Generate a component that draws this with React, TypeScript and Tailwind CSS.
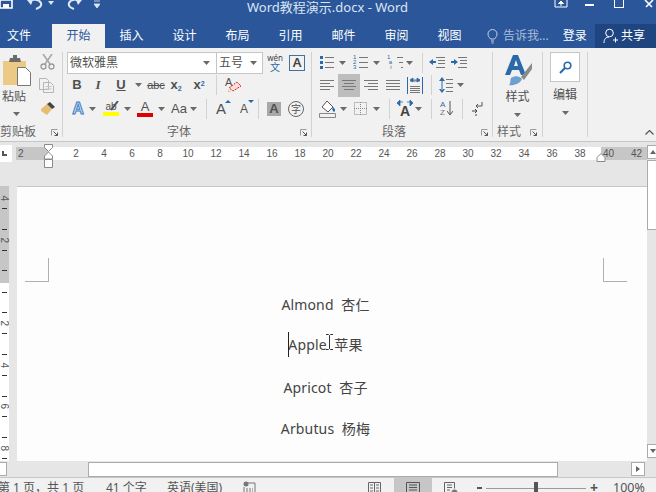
import type { ReactNode } from 'react';

const tabs = ['开始', '插入', '设计', '布局', '引用', '邮件', '审阅', '视图'];
const rulerNums = [2, 4, 6, 8, 10, 12, 14, 16, 18, 20, 22, 24, 26, 28, 30, 32, 34, 36, 38];

function Drop({ className = '' }: { className?: string }) {
  return (
    <svg width="7" height="4" viewBox="0 0 7 4" className={`shrink-0 ${className}`}>
      <path d="M0 0h7L3.5 4z" fill="#6a6a6a" />
    </svg>
  );
}

function Sep({ className = '' }: { className?: string }) {
  return <div className={`w-px h-[20px] bg-[#d2d2d2] shrink-0 ${className}`} />;
}

function Launcher() {
  return (
    <svg width="7" height="7" viewBox="0 0 7 7" className="shrink-0">
      <path d="M0.5 6.5V0.5H6.5" fill="none" stroke="#9a9a9a" />
      <path d="M2.5 2.5L6.5 6.5M6.5 3.5V6.5H3.5" fill="none" stroke="#555" />
    </svg>
  );
}

function Lines({ d, className = '' }: { d: string; className?: string }) {
  return (
    <svg width="14" height="13" viewBox="0 0 14 13" className={`shrink-0 ${className}`}>
      <path d={d} fill="none" stroke="#777" />
    </svg>
  );
}

function Row({ children, className = '' }: { children: ReactNode; className?: string }) {
  return <div className={`flex items-center ${className}`}>{children}</div>;
}

// the two kinds of cell in the vertical ruler
function VCell({ v }: { v: string }) {
  if (v === '') return <div className="h-[10.4px]" />;
  if (v === '-')
    return (
      <div className="h-[10.4px] flex items-center pl-[2px]">
        <div className="w-[5px] h-px bg-[#333]" />
      </div>
    );
  return (
    <div className="h-[10.4px] flex items-center justify-center text-[10px] text-[#555] rotate-90 font-['Liberation_Sans',sans-serif]">
      {v}
    </div>
  );
}

function GroupLabel({ text, className = '' }: { text: string; className?: string }) {
  return (
    <div className="h-[14px] mt-auto -mb-[2px] flex items-center">
      <span className={`text-[12px] leading-[14px] text-[#666] whitespace-nowrap ${className}`}>{text}</span>
      <div className="w-[16px] ml-auto flex justify-center">
        <Launcher />
      </div>
    </div>
  );
}

function TitleBar() {
  return (
    <div className="h-[24px] bg-[#2b579a] flex items-start overflow-hidden text-white">
      <svg width="13" height="9" viewBox="0 0 13 9" className="shrink-0">
        <path d="M0 0h12v8H0z" fill="none" stroke="#fff" strokeWidth="1.6" />
        <path d="M3 4h6v4H3z" fill="#fff" />
      </svg>
      <svg width="16" height="10" viewBox="0 0 16 10" className="ml-[14px] shrink-0">
        <path d="M2 1c3-2 10-2 12 2 1 3-2 5-5 6" fill="none" stroke="#dfe7f3" strokeWidth="2" />
        <path d="M0 0l6 0-2 5z" fill="#dfe7f3" />
      </svg>
      <svg width="6" height="4" viewBox="0 0 6 4" className="ml-[5px] mt-[1px] shrink-0">
        <path d="M0 0h6L3 4z" fill="#dfe7f3" />
      </svg>
      <svg width="15" height="10" viewBox="0 0 15 10" className="ml-[13px] shrink-0">
        <path d="M13 1C10-1 4-1 2 3c-1 3 2 5 5 6" fill="none" stroke="#dfe7f3" strokeWidth="2" />
        <path d="M15 0L9 0l2 5z" fill="#dfe7f3" />
      </svg>
      <svg width="6" height="8" viewBox="0 0 6 8" className="ml-[12px] shrink-0">
        <path d="M0 1h6M0 4h6L3 8z" fill="#dfe7f3" stroke="#dfe7f3" strokeWidth="0.8" />
      </svg>
      <span className="ml-[147px] text-[13px] leading-[14px] text-[#dce5f2] whitespace-nowrap">Word教程演示.docx - Word</span>
      <svg width="14" height="8" viewBox="0 0 14 8" className="ml-auto shrink-0">
        <path d="M1 0v7h12V0" fill="none" stroke="#fff" />
        <path d="M7 6V1M4.5 3.5L7 1l2.5 2.5z" fill="#fff" stroke="#fff" />
      </svg>
      <div className="w-[9px] h-[2px] bg-white ml-[17px] mt-[4px] shrink-0" />
      <div className="w-[10px] h-[8px] border border-white border-t-0 ml-[20px] shrink-0" />
      <svg width="10" height="8" viewBox="0 0 10 8" className="ml-[20px] mr-[2px] shrink-0">
        <path d="M1 0l7 7M9 0L2 7" stroke="#fff" strokeWidth="1.6" />
      </svg>
    </div>
  );
}

function TabBar() {
  return (
    <div className="h-[24px] bg-[#2b579a] flex items-stretch text-[12px] text-white">
      <div className="w-[38px] flex items-center justify-center">文件</div>
      <div className="ml-[14px] flex">
        {tabs.map((t, i) => (
          <div
            key={t}
            className={
              i === 0
                ? 'w-[53px] flex items-center justify-center bg-[#f1f1f1] text-[#2b579a]'
                : 'w-[53px] flex items-center justify-center'
            }
          >
            {t}
          </div>
        ))}
      </div>
      <svg width="11" height="15" viewBox="0 0 11 15" className="ml-[11px] self-center shrink-0">
        <path d="M3.5 10C2 8 1 7 1 5a4.5 4.5 0 0 1 9 0c0 2-1 3-2.500 5zM4 12h3M4.500 14h2" fill="none" stroke="#c5d3e6" />
      </svg>
      <span className="ml-[5px] self-center text-[#a9bcd8] whitespace-nowrap">告诉我...</span>
      <span className="ml-[14px] self-center whitespace-nowrap">登录</span>
      <div className="ml-auto w-[61px] bg-[#1f4580] flex items-center pl-[8px]">
        <svg width="15" height="16" viewBox="0 0 15 16" className="shrink-0">
          <circle cx="6.500" cy="5" r="3.800" fill="none" stroke="#fff" />
          <path d="M1 15c0-4 2-6 5-6M10 12h5M12.500 9.500v5" fill="none" stroke="#fff" />
        </svg>
        <span className="ml-[3px] whitespace-nowrap">共享</span>
      </div>
    </div>
  );
}

function ClipboardGroup() {
  return (
    <div className="w-[63px] h-[85px] border-r border-[#d2d2d2] flex flex-col shrink-0">
      <div className="flex">
        <div className="w-[37px] pl-[3px] flex flex-col">
          <svg width="28" height="31" viewBox="0 0 28 31" className="mt-[3px]">
            <path d="M0 6h23v24H0z" fill="#ecca85" />
            <path d="M7 3h3V0h4v3h3l1 4H6z" fill="#6b6b6b" />
            <path d="M14.500 12.500h8l5 5v13h-13z" fill="#fff" stroke="#777" />
          </svg>
          <span className="text-[12px] leading-[16px] text-[#555] mt-[3px] -ml-[1px] whitespace-nowrap">粘贴</span>
          <Drop className="ml-[10px] mt-[7px]" />
        </div>
        <div className="flex flex-col">
          <svg width="15" height="16" viewBox="0 0 15 16" className="ml-[3px] mt-[2px]">
            <path d="M3 0l7 10M12 0L5 10" stroke="#a5a5a5" strokeWidth="1.500" />
            <circle cx="3.500" cy="12.500" r="2.500" fill="none" stroke="#9a9a9a" strokeWidth="1.300" />
            <circle cx="11.500" cy="12.500" r="2.500" fill="none" stroke="#9a9a9a" strokeWidth="1.300" />
          </svg>
          <svg width="15" height="15" viewBox="0 0 15 15" className="ml-[2px] mt-[8px]">
            <path d="M.5.500h7l2 2v9H.5z M4.500 4.500h7l3 3v7h-10z" fill="#f1f1f1" stroke="#b5b5b5" />
            <path d="M6.500 8.500h6M6.500 11h6" stroke="#c5c5c5" />
          </svg>
          <svg width="16" height="15" viewBox="0 0 16 15" className="ml-[3px] mt-[8px]">
            <path d="M1 8l6-5 5 5-5 6-6-4z" fill="#e7bd72" />
            <path d="M7 3l3-2 5 5-3 2z" fill="#444" />
          </svg>
        </div>
      </div>
      <GroupLabel text="剪贴板" />
    </div>
  );
}

function FontGroup() {
  return (
    <div className="w-[249px] h-[85px] border-r border-[#d2d2d2] flex flex-col shrink-0 text-[#505050]">
      <Row className="h-[21px]">
        <div className="ml-[4px] w-[150px] h-[22px] bg-white border border-[#c6c6c6] flex items-center pl-[2px] pr-[6px] text-[12px]">
          <span>微软雅黑</span>
          <Drop className="ml-auto" />
        </div>
        <div className="-ml-px w-[47px] h-[22px] bg-white border border-[#c6c6c6] flex items-center pl-[2px] pr-[5px] text-[12px]">
          <span>五号</span>
          <Drop className="ml-auto" />
        </div>
        <div className="ml-[4px] w-[16px] h-[20px] flex flex-col items-center text-[#2b6aa8]">
          <span className="text-[8px] leading-[9px] text-[#444]">wén</span>
          <span className="text-[10px] leading-[11px]">文</span>
        </div>
        <div className="ml-[6px] w-[16px] h-[16px] border border-[#41719c] flex items-center justify-center text-[13px] font-semibold leading-none text-[#444]">
          A
        </div>
      </Row>

      <Row className="h-[18px] mt-[3px] font-['Liberation_Sans',sans-serif]">
        <span className="w-[14px] ml-[7px] text-center text-[13px] font-bold">B</span>
        <span className="w-[14px] ml-[7px] text-center text-[13px] italic font-['Liberation_Serif',serif] font-bold">I</span>
        <span className="w-[14px] ml-[9px] text-center text-[13px] font-bold underline">U</span>
        <Drop className="ml-[7px]" />
        <span className="w-[18px] ml-[5px] text-center text-[11px] line-through">abc</span>
        <span className="w-[14px] ml-[4px] text-center text-[13px] font-bold">
          x<sub className="text-[7px] text-[#2b6aa8]">2</sub>
        </span>
        <span className="w-[14px] ml-[9px] text-center text-[13px] font-bold">
          x<sup className="text-[7px] text-[#2b6aa8]">2</sup>
        </span>
        <Sep className="ml-[10px]" />
        <div className="ml-[8px] w-[18px] h-[18px] relative">
          <span className="text-[11px] leading-[12px] block">A</span>
          <svg width="14" height="11" viewBox="0 0 14 11" className="absolute left-[3px] top-[5px]">
            <path d="M1 7l8-6 4 4-8 5z" fill="#fbdede" stroke="#d92020" strokeDasharray="2 1" />
            <path d="M0 9l3 2-3 0z" fill="#e7bd72" />
          </svg>
        </div>
      </Row>

      <Row className="h-[19px] mt-[5px] font-['Liberation_Sans',sans-serif]">
        <span className="w-[14px] ml-[8px] text-center text-[16px] font-bold text-[#cfe0f3] [-webkit-text-stroke:1px_#3f7fc4]">A</span>
        <Drop className="ml-[4px]" />
        <div className="w-[16px] ml-[7px] flex flex-col items-center relative">
          <span className="text-[10px] leading-[11px]">ab</span>
          <div className="w-[16px] h-[4px] bg-[#ffff00]" />
          <svg width="9" height="11" viewBox="0 0 9 11" className="absolute right-0 top-0">
            <path d="M8 0L1 9" stroke="#555" strokeWidth="2" />
          </svg>
        </div>
        <Drop className="ml-[5px]" />
        <div className="w-[16px] ml-[6px] flex flex-col items-center">
          <span className="text-[13px] leading-[12px]">A</span>
          <div className="w-[16px] h-[4px] bg-[#e00000]" />
        </div>
        <Drop className="ml-[5px]" />
        <span className="w-[16px] ml-[6px] text-center text-[13px]">Aa</span>
        <Drop className="ml-[3px]" />
        <Sep className="ml-[9px]" />
        <div className="w-[13px] ml-[9px] relative">
          <span className="text-[15px] leading-[15px] block">A</span>
          <svg width="6" height="3" viewBox="0 0 6 3" className="absolute -right-[2px] -top-[1px]">
            <path d="M0 3h6L3 0z" fill="#2b6aa8" />
          </svg>
        </div>
        <div className="w-[12px] ml-[11px] relative">
          <span className="text-[12px] leading-[13px] block pt-[2px]">A</span>
          <svg width="6" height="3" viewBox="0 0 6 3" className="absolute -right-[2px] -top-[1px]">
            <path d="M0 0h6L3 3z" fill="#2b6aa8" />
          </svg>
        </div>
        <Sep className="ml-[6px]" />
        <div className="w-[14px] h-[14px] ml-[8px] bg-[#a8a8a8] flex items-center justify-center text-[13px] font-bold leading-none">
          A
        </div>
        <div className="w-[16px] h-[16px] ml-[7px] rounded-full border border-[#666] flex items-center justify-center text-[10px] leading-none font-['Noto_Sans_CJK_SC',sans-serif]">
          字
        </div>
      </Row>

      <GroupLabel text="字体" className="flex-1 text-center" />
    </div>
  );
}

function ParaGroup() {
  const dots = 'M5 1.500h9M5 6.500h9M5 11.500h9';
  return (
    <div className="w-[181px] h-[85px] border-r border-[#d2d2d2] flex flex-col shrink-0 text-[#444]">
      <Row className="h-[21px]">
        <div className="ml-[8px] w-[14px] relative">
          <Lines d={dots} />
          <svg width="3" height="13" viewBox="0 0 3 13" className="absolute left-0 top-0">
            <path d="M0 0h3v3H0zM0 5h3v3H0zM0 10h3v3H0z" fill="#2b6aa8" />
          </svg>
        </div>
        <Drop className="ml-[5px]" />
        <div className="ml-[7px] w-[15px] flex items-center">
          <span className="text-[6px] leading-[5px] w-[5px] text-[#2b6aa8] font-['Liberation_Sans',sans-serif]">1<br />2<br />3</span>
          <svg width="10" height="13" viewBox="0 0 10 13" className="shrink-0">
            <path d="M1 1.500h9M1 6.500h9M1 11.500h9" fill="none" stroke="#777" />
          </svg>
        </div>
        <Drop className="ml-[5px]" />
        <div className="ml-[7px] w-[16px] flex items-center">
          <span className="text-[6px] leading-[5px] w-[8px] text-[#2b6aa8] font-['Liberation_Sans',sans-serif]">1<br />&nbsp;a<br />&nbsp;&nbsp;i</span>
          <svg width="8" height="13" viewBox="0 0 8 13" className="shrink-0">
            <path d="M2 1.500h6M4 6.500h4M6 11.500h2" fill="none" stroke="#777" />
          </svg>
        </div>
        <Drop className="ml-[3px]" />
        <Sep className="ml-[9px]" />
        <svg width="16" height="13" viewBox="0 0 16 13" className="ml-[6px] shrink-0">
          <path d="M7 1.500h9M9 4.500h7M9 7.500h7M7 11.500h9" fill="none" stroke="#777" />
          <path d="M0 6l4-3v2h3v2H4v2z" fill="#2b6aa8" />
        </svg>
        <svg width="16" height="13" viewBox="0 0 16 13" className="ml-[6px] shrink-0">
          <path d="M7 1.500h9M9 4.500h7M9 7.500h7M7 11.500h9" fill="none" stroke="#777" />
          <path d="M7 6L3 3v2H0v2h3v2z" fill="#2b6aa8" />
        </svg>
      </Row>

      <Row className="h-[18px] mt-[3px]">
        <Lines className="ml-[8px]" d="M0 1.500h14M0 4.500h10M0 7.500h14M0 10.500h10" />
        <div className="ml-[4px] w-[22px] h-[23px] bg-[#bdbdbd] flex items-center justify-center shrink-0">
          <Lines d="M0 1.500h14M2 4.500h10M0 7.500h14M2 10.500h10" />
        </div>
        <Lines className="ml-[4px]" d="M0 1.500h14M4 4.500h10M0 7.500h14M4 10.500h10" />
        <Lines className="ml-[8px]" d="M0 1.500h14M0 4.500h14M0 7.500h14M0 10.500h14" />
        <svg width="16" height="17" viewBox="0 0 16 17" className="ml-[7px] shrink-0">
          <path d="M.5 0v17M15.500 0v17" stroke="#2b6aa8" />
          <path d="M3 4h10M3 9.500h10M3 11.500h10M3 13.500h10M3 15.500h10" stroke="#777" />
          <path d="M3 3l3-2v4zM13 3l-3-2v4zM5 3h6" fill="#2b6aa8" stroke="#2b6aa8" strokeWidth="0.800" />
        </svg>
        <Sep className="ml-[8px]" />
        <svg width="14" height="16" viewBox="0 0 14 16" className="ml-[7px] shrink-0">
          <path d="M7 2.500h7M7 6.500h7M7 10.500h7M7 14.500h7" stroke="#777" />
          <path d="M3 0l3 4H0zM3 16l3-4H0zM2.500 3h1v10h-1z" fill="#2b6aa8" />
        </svg>
        <Drop className="ml-[4px]" />
      </Row>

      <Row className="h-[19px] mt-[5px]">
        <svg width="17" height="18" viewBox="0 0 17 18" className="ml-[7px] shrink-0">
          <path d="M8 1l6 6-5 5-6-5z" fill="#fff" stroke="#555" />
          <path d="M14 7c2 2 3 3 1 5-2-1-2-3-1-5z" fill="#2b6aa8" />
          <path d="M.5 13.500h16v4H.5z" fill="#f1f1f1" stroke="#888" />
        </svg>
        <Drop className="ml-[4px]" />
        <svg width="13" height="13" viewBox="0 0 13 13" className="ml-[7px] shrink-0">
          <path d="M.5.500h12v12H.5zM6.500 0v13M0 6.500h13" fill="none" stroke="#888" strokeDasharray="1 1" />
        </svg>
        <Drop className="ml-[6px]" />
        <Sep className="ml-[9px]" />
        <div className="ml-[7px] w-[16px] relative h-[18px] flex justify-center items-end">
          <span className="text-[14px] leading-[14px] font-bold font-['Liberation_Sans',sans-serif]">A</span>
          <svg width="16" height="6" viewBox="0 0 16 6" className="absolute left-0 top-0">
            <path d="M0 3l3-3v6zM16 3l-3-3v6zM3 2l3 0M13 2l-3 0" fill="#2b6aa8" stroke="#2b6aa8" strokeWidth="0.800" />
          </svg>
        </div>
        <Drop className="ml-[2px]" />
        <Sep className="ml-[9px]" />
        <div className="ml-[8px] w-[13px] flex items-center">
          <span className="text-[8px] leading-[8px] w-[7px] text-[#2b6aa8] font-['Liberation_Sans',sans-serif]">
            A<br />
            <span className="text-[#777]">Z</span>
          </span>
          <svg width="6" height="15" viewBox="0 0 6 15" className="shrink-0">
            <path d="M3 0v13M0 10l3 4 3-4" fill="none" stroke="#555" />
          </svg>
        </div>
        <Sep className="ml-[9px]" />
        <svg width="11" height="14" viewBox="0 0 11 14" className="ml-[9px] shrink-0">
          <path d="M10 0v4H4M6 2L4 4l2 2" fill="none" stroke="#555" />
          <path d="M0 9h5M3 7l2 2-2 2M4 12v2" fill="none" stroke="#444" />
        </svg>
      </Row>

      <GroupLabel text="段落" className="flex-1 text-center" />
    </div>
  );
}

function StyleGroup() {
  return (
    <div className="w-[50px] h-[85px] border-r border-[#d2d2d2] flex flex-col items-center shrink-0 text-[#505050]">
      <svg width="28" height="31" viewBox="0 0 28 31" className="mt-[3px]">
        <path d="M9 0h5l8 20h-5l-2-5H8l-2 5H1zM10 11h4l-2-6z" fill="#2b6aa8" fillRule="evenodd" />
        <path d="M28 8L17 22l3 3 8-11z" fill="#8a8a8a" />
        <path d="M7 23c4-3 9-2 11 1-2 5-9 7-13 6 2-2 1-5 2-7z" fill="#6f9fd0" />
      </svg>
      <span className="text-[12px] leading-[16px] mt-[3px] whitespace-nowrap">样式</span>
      <Drop className="mt-[8px]" />
      <div className="h-[14px] mt-auto -mb-[2px] w-full flex items-center pl-[4px]">
        <span className="text-[12px] leading-[14px] text-[#666] whitespace-nowrap">样式</span>
        <div className="ml-[9px]">
          <Launcher />
        </div>
      </div>
    </div>
  );
}

function EditGroup() {
  return (
    <div className="w-[45px] h-[85px] border-r border-[#d2d2d2] flex flex-col items-center shrink-0 text-[#505050]">
      <div className="w-[30px] h-[30px] bg-white border border-[#c6c6c6] flex items-center justify-center">
        <svg width="13" height="13" viewBox="0 0 13 13">
          <circle cx="8.500" cy="4.500" r="3.300" fill="none" stroke="#2b6aa8" strokeWidth="1.600" />
          <path d="M6 7l-5 5" stroke="#2b6aa8" strokeWidth="2.200" />
        </svg>
      </div>
      <span className="text-[12px] leading-[16px] mt-[5px] whitespace-nowrap">编辑</span>
      <Drop className="mt-[8px]" />
    </div>
  );
}

function Ribbon() {
  return (
    <div className="h-[93px] bg-[#f1f1f1] pt-[4px] flex items-start overflow-hidden">
      <ClipboardGroup />
      <FontGroup />
      <ParaGroup />
      <StyleGroup />
      <EditGroup />
      <div className="flex-1 h-[85px] flex items-end justify-end pr-[2px] pb-[2px]">
        <svg width="9" height="5" viewBox="0 0 9 5">
          <path d="M.5 4.500l4-4 4 4" fill="none" stroke="#555" strokeWidth="1.200" />
        </svg>
      </div>
    </div>
  );
}

function HRuler() {
  return (
    <div className="h-[44px] bg-[#e6e6e6] flex items-start">
      <div className="w-[12px] h-[17px] mt-[3px] bg-white flex items-center pl-[2px]">
        <div className="w-[5px] h-[5px] border-l-2 border-b-2 border-[#555]" />
      </div>
      <div className="relative w-[631px] h-[13px] ml-[4px] mt-[5px] flex text-[10px] leading-[13px] text-[#555] font-['Liberation_Sans',sans-serif]">
        <div className="w-[32px] bg-[#c6c6c6] pl-[2px]">2</div>
        <div className="w-[553px] bg-white flex pl-[14px]">
          {rulerNums.map((n) => (
            <span key={n} className="w-[28px] shrink-0 text-center">
              {n}
            </span>
          ))}
        </div>
        <div className="flex-1 bg-[#c6c6c6] flex pl-[2px]">
          <span className="w-[28px]">40</span>
          <span className="w-[14px]">42</span>
        </div>
        <svg width="10" height="25" viewBox="0 0 10 25" className="absolute left-[28px] -top-[3px]">
          <path d="M.5.500h8v3l-4 4-4-4zM4.500 8l4 4v3h-8v-3z" fill="#fff" stroke="#8a8a8a" />
          <path d="M.5 15.500h8v8h-8z" fill="#fff" stroke="#8a8a8a" />
        </svg>
        <svg width="10" height="9" viewBox="0 0 10 9" className="absolute left-[580px] top-[6px]">
          <path d="M5 .500l4 4v4H1v-4z" fill="#fff" stroke="#8a8a8a" />
        </svg>
      </div>
    </div>
  );
}

function VRuler() {
  const top = ['4', '-', '', '-', '2', '-', '', '-'];
  const rest = ['-', '', '-', '2', '-', '', '-', '4', '-', '', '-', '6', '-', '', '-', '8', '-'];
  return (
    <div className="w-[9px] shrink-0 flex flex-col h-full">
      <div className="h-[97px] bg-[#c6c6c6] pt-[7px]">
        {top.map((v, i) => (
          <VCell key={i} v={v} />
        ))}
      </div>
      <div className="flex-1 bg-white pt-[4px] overflow-hidden">
        {rest.map((v, i) => (
          <VCell key={i} v={v} />
        ))}
      </div>
    </div>
  );
}

function Page() {
  return (
    <div className="flex-1 h-full bg-[#fdfdfd] border-t border-[#c6c6c6] overflow-hidden text-[14px] leading-[20px] text-[#444]">
      <div className="mt-[71px] h-[24px] flex justify-between pl-[8px] pr-[20px]">
        <div className="w-[24px] h-[24px] border-r border-b border-[#b0b0b0]" />
        <div className="w-[24px] h-[24px] border-l border-b border-[#b0b0b0]" />
      </div>
      <div className="ml-[31px] mr-[44px] flex flex-col items-center whitespace-pre tracking-[0.15px]">
        <div className="mt-[13px]">Almond  杏仁</div>
        <div className="mt-[20px] relative">
          Apple  苹果
          <div className="absolute left-0 -top-[3px] w-px h-[25px] bg-[#222]" />
          <svg width="7" height="16" viewBox="0 0 7 16" className="absolute left-[38px] -top-[1px]">
            <path d="M0 .500h2.500L3.500 1.500 4.500.500H7M3.500 1.500v13M0 15.500h2.500l1-1 1 1H7" fill="none" stroke="#333" />
          </svg>
        </div>
        <div className="mt-[23px]">Apricot  杏子</div>
        <div className="mt-[21px]">Arbutus  杨梅</div>
      </div>
    </div>
  );
}

function VScroll() {
  return (
    <div className="w-[9px] bg-[#e6e6e6] flex flex-col pt-[3px] pb-[3px] shrink-0">
      <div className="w-[10px] h-[14px] bg-white border border-[#ababab] flex items-center pl-[2px]">
        <svg width="6" height="4" viewBox="0 0 6 4">
          <path d="M0 4h6L3 0z" fill="#666" />
        </svg>
      </div>
      <div className="w-[10px] h-[70px] mt-px bg-white border border-[#ababab]" />
      <div className="w-[10px] h-[14px] mt-auto bg-white border border-[#ababab] flex items-center pl-[2px]">
        <svg width="6" height="4" viewBox="0 0 6 4">
          <path d="M0 0h6L3 4z" fill="#666" />
        </svg>
      </div>
    </div>
  );
}

function HScroll() {
  return (
    <div className="h-[16px] bg-[#e6e6e6] flex items-center">
      <div className="w-[7px] h-[14px] bg-white border border-l-0 border-[#ababab]" />
      <div className="ml-[81px] w-[470px] h-[15px] bg-white border border-[#ababab]" />
      <div className="ml-[73px] w-[14px] h-[14px] bg-white border border-[#ababab] flex items-center justify-center">
        <svg width="4" height="6" viewBox="0 0 4 6">
          <path d="M0 0v6l4-3z" fill="#666" />
        </svg>
      </div>
    </div>
  );
}

function StatusBar() {
  return (
    <div className="h-[15px] bg-[#f1f1f1] border-t border-[#c6c6c6] flex items-start overflow-hidden text-[12px] leading-[16px] text-[#555] whitespace-nowrap">
      <div className="-ml-[2px] w-[108px] pt-[2px] shrink-0">第 1 页，共 1 页</div>
      <div className="w-[61px] pt-[2px] shrink-0">41 个字</div>
      <div className="w-[76px] pt-[2px] shrink-0">英语(美国)</div>
      <svg width="13" height="12" viewBox="0 0 13 12" className="mt-[3px] shrink-0">
        <circle cx="3" cy="3" r="2.500" fill="#777" />
        <path d="M5 2h7v10H1V6" fill="none" stroke="#777" />
        <path d="M3 8h7M3 10h7" stroke="#777" strokeDasharray="2 1" />
      </svg>
      <svg width="13" height="13" viewBox="0 0 13 13" className="ml-[112px] mt-[4px] shrink-0">
        <path d="M.5.500h12v13H.5zM6.500 0v13M2 3h3M2 6h3M2 9h3M8 3h3M8 6h3M8 9h3" fill="none" stroke="#666" />
      </svg>
      <div className="ml-[13px] w-[38px] h-[15px] bg-[#c6c6c6] flex justify-center pt-[4px] shrink-0">
        <svg width="14" height="13" viewBox="0 0 14 13" className="shrink-0">
          <path d="M.5.500h13v13H.5zM3 3h8M3 5.500h8M3 8h8M3 10.500h8" fill="none" stroke="#555" />
        </svg>
      </div>
      <svg width="14" height="13" viewBox="0 0 14 13" className="ml-[12px] mt-[4px] shrink-0">
        <path d="M8 12.500H.5V.500h10v6M3 3h5M3 5.500h5M3 8h3" fill="none" stroke="#666" />
        <circle cx="10.500" cy="10.500" r="3" fill="#777" />
      </svg>
      <div className="ml-[19px] w-[5px] h-[2px] mt-[9px] bg-[#555] shrink-0" />
      <div className="ml-[4px] w-[100px] h-px mt-[10px] bg-[#9a9a9a] relative shrink-0">
        <div className="absolute left-[48px] -top-[6px] w-[4px] h-[11px] bg-[#555]" />
      </div>
      <span className="ml-[4px] mt-[3px] w-[8px] text-center text-[14px] leading-[14px] font-bold shrink-0">+</span>
      <span className="ml-[15px] pt-[2px] text-[12.5px] leading-[16px] shrink-0">100%</span>
    </div>
  );
}

export default function App() {
  return (
    <div className="w-[656px] h-[492px] overflow-hidden flex flex-col bg-[#e6e6e6] font-['Noto_Sans','Noto_Sans_CJK_SC',sans-serif]">
      <TitleBar />
      <TabBar />
      <Ribbon />
      <div className="h-px bg-[#c6c6c6]" />
      <div className="h-[319px] flex">
        <div className="w-[647px] flex flex-col">
          <HRuler />
          <div className="flex-1 flex min-h-0">
            <VRuler />
            <div className="w-[8px] bg-[#e6e6e6] shrink-0" />
            <Page />
          </div>
        </div>
        <VScroll />
      </div>
      <HScroll />
      <StatusBar />
    </div>
  );
}
